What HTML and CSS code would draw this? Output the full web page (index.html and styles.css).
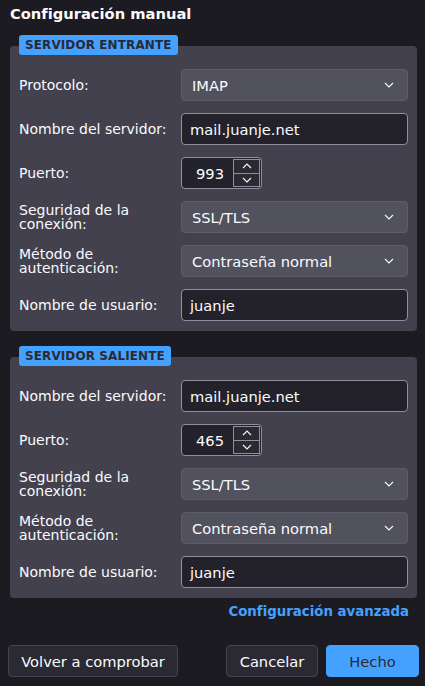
FILE: index.html
```html
<!DOCTYPE html>
<html lang="es">
<head>
<meta charset="utf-8">
<link rel="stylesheet" href="styles.css">
</head>
<body>
<h1 class="title">Configuración manual</h1>

<section class="group">
  <div class="badge">SERVIDOR ENTRANTE</div>
  <div class="panel">
    <label class="lbl">Protocolo:</label>
    <div class="select"><span>IMAP</span><svg class="chev" viewBox="0 0 10 6"><path d="M1 1l4 4 4-4"/></svg></div>

    <label class="lbl">Nombre del servidor:</label>
    <div class="input">mail.juanje.net</div>

    <label class="lbl">Puerto:</label>
    <div class="number"><span class="num">993</span><div class="spin"><div class="sb"><svg viewBox="0 0 10 6"><path d="M1 5l4-4 4 4"/></svg></div><div class="sb"><svg viewBox="0 0 10 6"><path d="M1 1l4 4 4-4"/></svg></div></div></div>

    <label class="lbl">Seguridad de la conexión:</label>
    <div class="select"><span>SSL/TLS</span><svg class="chev" viewBox="0 0 10 6"><path d="M1 1l4 4 4-4"/></svg></div>

    <label class="lbl">Método de autenticación:</label>
    <div class="select"><span>Contraseña normal</span><svg class="chev" viewBox="0 0 10 6"><path d="M1 1l4 4 4-4"/></svg></div>

    <label class="lbl">Nombre de usuario:</label>
    <div class="input">juanje</div>
  </div>
</section>

<section class="group second">
  <div class="badge">SERVIDOR SALIENTE</div>
  <div class="panel">
    <label class="lbl">Nombre del servidor:</label>
    <div class="input">mail.juanje.net</div>

    <label class="lbl">Puerto:</label>
    <div class="number"><span class="num">465</span><div class="spin"><div class="sb"><svg viewBox="0 0 10 6"><path d="M1 5l4-4 4 4"/></svg></div><div class="sb"><svg viewBox="0 0 10 6"><path d="M1 1l4 4 4-4"/></svg></div></div></div>

    <label class="lbl">Seguridad de la conexión:</label>
    <div class="select"><span>SSL/TLS</span><svg class="chev" viewBox="0 0 10 6"><path d="M1 1l4 4 4-4"/></svg></div>

    <label class="lbl">Método de autenticación:</label>
    <div class="select"><span>Contraseña normal</span><svg class="chev" viewBox="0 0 10 6"><path d="M1 1l4 4 4-4"/></svg></div>

    <label class="lbl">Nombre de usuario:</label>
    <div class="input">juanje</div>
  </div>
</section>

<div class="linkrow"><a class="adv">Configuración avanzada</a></div>

<div class="buttons">
  <button class="btn recheck">Volver a comprobar</button>
  <div class="right">
    <button class="btn cancel">Cancelar</button>
    <button class="btn primary">Hecho</button>
  </div>
</div>
</body>
</html>
```

FILE: styles.css
```css
html, body {
  margin: 0;
  padding: 0;
  background: #1c1b22;
  color: #fbfbfe;
  font-family: "DejaVu Sans", sans-serif;
  font-size: 14px;
}
body {
  width: 425px;
  height: 686px;
  overflow: hidden;
}
.title {
  margin: 0;
  padding: 5px 10px 0;
  font-size: 14.7px;
  font-weight: bold;
  line-height: 18px;
}
.group {
  position: relative;
  margin: 23px 8px 0 10px;
}
.group.second {
  margin-top: 26px;
}
.badge {
  position: absolute;
  left: 9px;
  top: -11px;
  height: 20px;
  line-height: 20px;
  padding: 0 6px;
  background: #45a1ff;
  color: #2b2a33;
  font-size: 12px;
  font-weight: bold;
  letter-spacing: 0.1px;
  border-radius: 3px;
}
.panel {
  background: #42414d;
  border-radius: 4px;
  padding: 23px 9px 10px 9px;
  display: grid;
  grid-template-columns: 162px 1fr;
  row-gap: 12px;
  align-items: center;
}
.lbl {
  line-height: 14px;
  padding-right: 8px;
}
.select {
  height: 32px;
  box-sizing: border-box;
  background: #52515e;
  border: 1px solid #5d5c68;
  border-radius: 4px;
  display: flex;
  align-items: center;
  justify-content: space-between;
  padding: 0 13px 0 10px;
  font-size: 14.67px;
}
.chev {
  width: 10px;
  height: 6px;
  fill: none;
  stroke: #fbfbfe;
  stroke-width: 1.1;
}
.input {
  height: 32px;
  box-sizing: border-box;
  background: #23222b;
  border: 1px solid #8f8f9d;
  border-radius: 4px;
  display: flex;
  align-items: center;
  padding: 0 8px;
  font-size: 14.67px;
}
.number {
  width: 81px;
  height: 32px;
  box-sizing: border-box;
  background: #23222b;
  border: 1px solid #8f8f9d;
  border-radius: 4px;
  display: flex;
  align-items: center;
  justify-content: flex-end;
  padding: 0 1px 0 0;
  font-size: 14.67px;
}
.num {
  padding-right: 9px;
}
.spin {
  width: 27px;
  height: 28px;
  display: flex;
  flex-direction: column;
  border: 1px solid #8f8f9d;
  box-sizing: border-box;
  background: #2b2a33;
}
.sb {
  flex: 1;
  display: flex;
  align-items: center;
  justify-content: center;
}
.sb + .sb {
  border-top: 1px solid #8f8f9d;
}
.sb svg {
  width: 10px;
  height: 6px;
  fill: none;
  stroke: #fbfbfe;
  stroke-width: 1.1;
}
.linkrow {
  display: flex;
  justify-content: flex-end;
  padding: 6px 16px 0 0;
}
.adv {
  color: #45a1ff;
  font-weight: bold;
  font-size: 13.33px;
  line-height: 16px;
}
.buttons {
  display: flex;
  justify-content: space-between;
  padding: 25px 6px 0 8px;
}
.right {
  display: flex;
  gap: 8px;
}
.btn {
  height: 32px;
  box-sizing: border-box;
  background: #2b2a33;
  color: #fbfbfe;
  border: 1px solid #45444d;
  border-radius: 4px;
  font-family: "DejaVu Sans", sans-serif;
  font-size: 14.67px;
  padding: 0;
  white-space: nowrap;
}
.recheck {
  width: 170px;
}
.cancel {
  width: 92px;
}
.primary {
  width: 93px;
  background: #45a1ff;
  border-color: #45a1ff;
  color: #2b2a33;
}
```
